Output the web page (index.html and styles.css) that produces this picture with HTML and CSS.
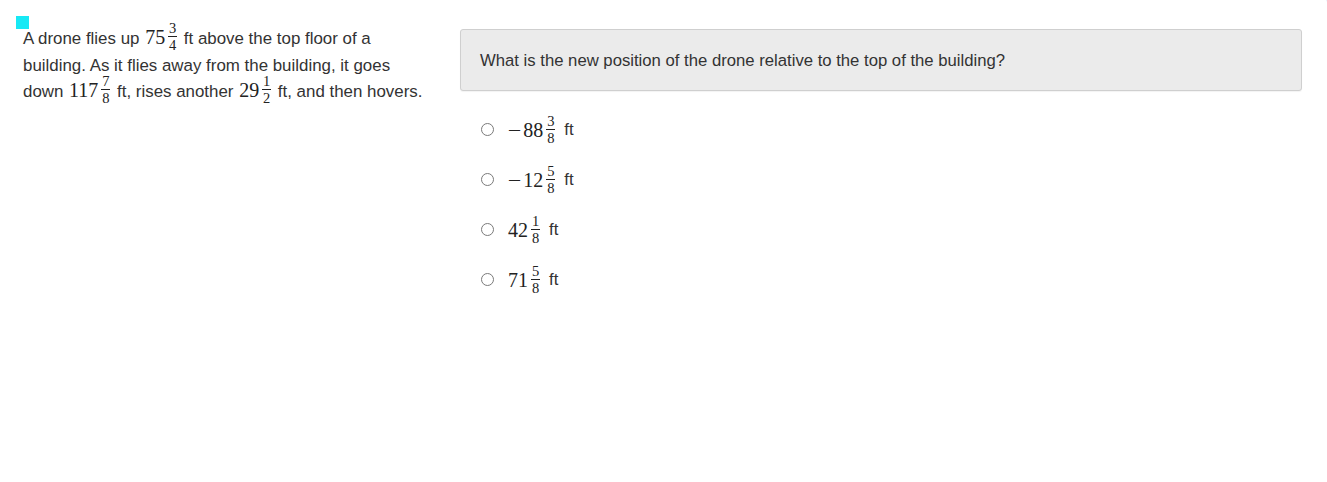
FILE: index.html
```html
<!DOCTYPE html>
<html>
<head>
<meta charset="utf-8">
<link rel="stylesheet" href="styles.css">
</head>
<body>
<div class="corner"></div>
<div class="page">
  <div class="stimulus">
    <span class="marker"></span>
    <p class="text">A drone flies up <span class="m"><span class="n">75</span><span class="frac"><span class="num">3</span><span class="den">4</span></span></span> ft above the top floor of a building. As it flies away from the building, it goes down <span class="m"><span class="n">117</span><span class="frac"><span class="num">7</span><span class="den">8</span></span></span> ft, rises another <span class="m"><span class="n">29</span><span class="frac"><span class="num">1</span><span class="den">2</span></span></span> ft, and then hovers.</p>
  </div>
  <div class="question">
    <div class="prompt">What is the new position of the drone relative to the top of the building?</div>
    <ul class="options">
      <li class="option"><span class="radio"></span><span class="m"><span class="minus">−</span><span class="n">88</span><span class="frac"><span class="num">3</span><span class="den">8</span></span></span> ft</li>
      <li class="option"><span class="radio"></span><span class="m"><span class="minus">−</span><span class="n">12</span><span class="frac"><span class="num">5</span><span class="den">8</span></span></span> ft</li>
      <li class="option"><span class="radio"></span><span class="m"><span class="n">42</span><span class="frac"><span class="num">1</span><span class="den">8</span></span></span> ft</li>
      <li class="option"><span class="radio"></span><span class="m"><span class="n">71</span><span class="frac"><span class="num">5</span><span class="den">8</span></span></span> ft</li>
    </ul>
  </div>
</div>
</body>
</html>
```
FILE: styles.css
```css
html, body {
  margin: 0;
  padding: 0;
  background: #ffffff;
}
body {
  font-family: "Liberation Sans", Arial, sans-serif;
  font-size: 16.7px;
  color: #333333;
  position: relative;
  width: 1327px;
  height: 482px;
  overflow: hidden;
}
.corner {
  position: absolute;
  top: -5px;
  right: -3px;
  width: 12px;
  height: 10px;
  border-right: 3px solid #2a7bd6;
  border-top-right-radius: 7px;
}
.page {
  display: flex;
  align-items: flex-start;
  padding: 26px 25px 0 23px;
  gap: 33px;
}
.stimulus {
  position: relative;
  width: 404px;
  flex: none;
}
.marker {
  position: absolute;
  left: -7px;
  top: -10px;
  width: 13px;
  height: 13px;
  background: #17e9f5;
}
.text {
  margin: 0;
  font-size: 16.9px;
  line-height: 26.5px;
}
.m {
  font-family: "Liberation Serif", "Times New Roman", serif;
  font-size: 20px;
  line-height: 20px;
  color: #222;
  white-space: nowrap;
  margin: 0 2px 0 1px;
}
.minus {
  display: inline-block;
  transform: scaleX(1.2);
  margin: 0 3px 0 1px;
}
.frac {
  display: inline-flex;
  flex-direction: column;
  align-items: center;
  font-size: 14.5px;
  line-height: 14px;
  margin: -8px 0 -6px 3px;
  vertical-align: 11px;
}
.num {
  padding: 0 0 1px;
  border-bottom: 1px solid #222;
  min-width: 9px;
  text-align: center;
}
.den {
  padding: 1px 0 0;
}
.question {
  flex: 1;
  padding-top: 3px;
}
.prompt {
  background: #ebebeb;
  border: 1px solid #cfcfcf;
  border-radius: 3px;
  display: flex;
  align-items: center;
  padding: 1px 19px 0;
  box-sizing: border-box;
  height: 62px;
  box-shadow: 0 1px 1px rgba(0,0,0,0.05);
}
.options {
  list-style: none;
  margin: 13px 0 0;
  padding: 0 0 0 21px;
}
.option {
  height: 50px;
  display: flex;
  align-items: center;
  padding-top: 1px;
  box-sizing: border-box;
}
.radio {
  width: 11px;
  height: 11px;
  border: 1px solid #7a7a7a;
  border-radius: 50%;
  margin-right: 14px;
  flex: none;
}
.option .m {
  margin: 0 9px 0 0;
}
```
